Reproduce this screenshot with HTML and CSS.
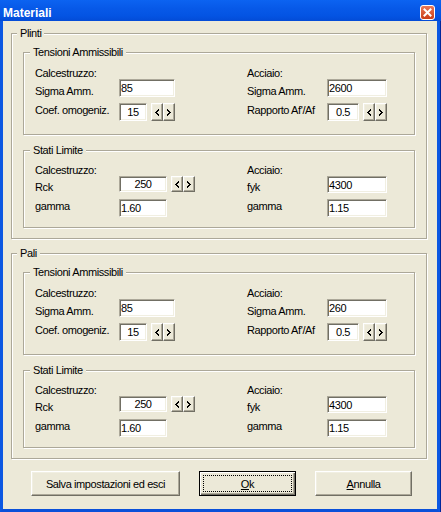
FILE: index.html
```html
<!DOCTYPE html>
<html lang="it">
<head>
<meta charset="utf-8">
<title>Materiali</title>
<link rel="stylesheet" href="styles.css">
</head>
<body>
<div class="window">
  <div class="titlebar">
    <span class="title">Materiali</span>
    <span class="close">
      <svg width="15" height="15" viewBox="0 0 15 15">
        <defs>
          <linearGradient id="cg" x1="0" y1="0" x2="0" y2="1">
            <stop offset="0" stop-color="#ea7a5a"/>
            <stop offset="1" stop-color="#c93a14"/>
          </linearGradient>
        </defs>
        <rect x="0.5" y="0.5" width="14" height="14" rx="2.5" fill="url(#cg)" stroke="#fff"/>
        <path d="M4.5 4.5 L10.5 10.5 M10.5 4.5 L4.5 10.5" stroke="#fff" stroke-width="2" stroke-linecap="square"/>
      </svg>
    </span>
  </div>
  <div class="frame">
    <div class="client">

      <fieldset class="group outer">
        <legend>Plinti</legend>
        <div class="outer-body">
          <fieldset class="group inner">
            <legend>Tensioni Ammissibili</legend>
            <div class="cols tens-body">
              <div class="col left">
                <div class="hdr">Calcestruzzo:</div>
                <div class="row ra"><span class="lbl">Sigma Amm.</span><input class="field w56" type="text" value="85" readonly></div>
                <div class="row rb"><span class="lbl">Coef. omogeniz.</span><input class="field w28 ctr" type="text" value="15" readonly><span class="spin"><span class="sb"><svg width="4" height="7" viewBox="0 0 4 7" shape-rendering="crispEdges"><path d="M3 0h1v1h-1z M2 1h2v1h-2z M1 2h2v1h-2z M0 3h2v1h-2z M1 4h2v1h-2z M2 5h2v1h-2z M3 6h1v1h-1z"/></svg></span><span class="sb"><svg width="4" height="7" viewBox="0 0 4 7" shape-rendering="crispEdges"><path d="M0 0h1v1h-1z M0 1h2v1h-2z M1 2h2v1h-2z M2 3h2v1h-2z M1 4h2v1h-2z M0 5h2v1h-2z M0 6h1v1h-1z"/></svg></span></span></div>
              </div>
              <div class="col right">
                <div class="hdr">Acciaio:</div>
                <div class="row ra"><span class="lbl">Sigma Amm.</span><input class="field w60" type="text" value="2600" readonly></div>
                <div class="row rb"><span class="lbl">Rapporto Af'/Af</span><input class="field w32 ctr" type="text" value="0.5" readonly><span class="spin"><span class="sb"><svg width="4" height="7" viewBox="0 0 4 7" shape-rendering="crispEdges"><path d="M3 0h1v1h-1z M2 1h2v1h-2z M1 2h2v1h-2z M0 3h2v1h-2z M1 4h2v1h-2z M2 5h2v1h-2z M3 6h1v1h-1z"/></svg></span><span class="sb"><svg width="4" height="7" viewBox="0 0 4 7" shape-rendering="crispEdges"><path d="M0 0h1v1h-1z M0 1h2v1h-2z M1 2h2v1h-2z M2 3h2v1h-2z M1 4h2v1h-2z M0 5h2v1h-2z M0 6h1v1h-1z"/></svg></span></span></div>
              </div>
            </div>
          </fieldset>
          <fieldset class="group inner stati">
            <legend>Stati Limite</legend>
            <div class="cols stati-body">
              <div class="col left">
                <div class="hdr">Calcestruzzo:</div>
                <div class="row sa"><span class="lbl">Rck</span><input class="field w48 h16 ctr" type="text" value="250" readonly><span class="spin s16"><span class="sb"><svg width="4" height="7" viewBox="0 0 4 7" shape-rendering="crispEdges"><path d="M3 0h1v1h-1z M2 1h2v1h-2z M1 2h2v1h-2z M0 3h2v1h-2z M1 4h2v1h-2z M2 5h2v1h-2z M3 6h1v1h-1z"/></svg></span><span class="sb"><svg width="4" height="7" viewBox="0 0 4 7" shape-rendering="crispEdges"><path d="M0 0h1v1h-1z M0 1h2v1h-2z M1 2h2v1h-2z M2 3h2v1h-2z M1 4h2v1h-2z M0 5h2v1h-2z M0 6h1v1h-1z"/></svg></span></span></div>
                <div class="row sb-row"><span class="lbl">gamma</span><input class="field w48" type="text" value="1.60" readonly></div>
              </div>
              <div class="col right">
                <div class="hdr">Acciaio:</div>
                <div class="row sa"><span class="lbl">fyk</span><input class="field w60 h17" type="text" value="4300" readonly></div>
                <div class="row sb-row"><span class="lbl">gamma</span><input class="field w60" type="text" value="1.15" readonly></div>
              </div>
            </div>
          </fieldset>
        </div>
      </fieldset>

      <fieldset class="group outer pali">
        <legend>Pali</legend>
        <div class="outer-body">
          <fieldset class="group inner">
            <legend>Tensioni Ammissibili</legend>
            <div class="cols tens-body">
              <div class="col left">
                <div class="hdr">Calcestruzzo:</div>
                <div class="row ra"><span class="lbl">Sigma Amm.</span><input class="field w56" type="text" value="85" readonly></div>
                <div class="row rb"><span class="lbl">Coef. omogeniz.</span><input class="field w28 ctr" type="text" value="15" readonly><span class="spin"><span class="sb"><svg width="4" height="7" viewBox="0 0 4 7" shape-rendering="crispEdges"><path d="M3 0h1v1h-1z M2 1h2v1h-2z M1 2h2v1h-2z M0 3h2v1h-2z M1 4h2v1h-2z M2 5h2v1h-2z M3 6h1v1h-1z"/></svg></span><span class="sb"><svg width="4" height="7" viewBox="0 0 4 7" shape-rendering="crispEdges"><path d="M0 0h1v1h-1z M0 1h2v1h-2z M1 2h2v1h-2z M2 3h2v1h-2z M1 4h2v1h-2z M0 5h2v1h-2z M0 6h1v1h-1z"/></svg></span></span></div>
              </div>
              <div class="col right">
                <div class="hdr">Acciaio:</div>
                <div class="row ra"><span class="lbl">Sigma Amm.</span><input class="field w60" type="text" value="260" readonly></div>
                <div class="row rb"><span class="lbl">Rapporto Af'/Af</span><input class="field w32 ctr" type="text" value="0.5" readonly><span class="spin"><span class="sb"><svg width="4" height="7" viewBox="0 0 4 7" shape-rendering="crispEdges"><path d="M3 0h1v1h-1z M2 1h2v1h-2z M1 2h2v1h-2z M0 3h2v1h-2z M1 4h2v1h-2z M2 5h2v1h-2z M3 6h1v1h-1z"/></svg></span><span class="sb"><svg width="4" height="7" viewBox="0 0 4 7" shape-rendering="crispEdges"><path d="M0 0h1v1h-1z M0 1h2v1h-2z M1 2h2v1h-2z M2 3h2v1h-2z M1 4h2v1h-2z M0 5h2v1h-2z M0 6h1v1h-1z"/></svg></span></span></div>
              </div>
            </div>
          </fieldset>
          <fieldset class="group inner stati">
            <legend>Stati Limite</legend>
            <div class="cols stati-body">
              <div class="col left">
                <div class="hdr">Calcestruzzo:</div>
                <div class="row sa"><span class="lbl">Rck</span><input class="field w48 h16 ctr" type="text" value="250" readonly><span class="spin s16"><span class="sb"><svg width="4" height="7" viewBox="0 0 4 7" shape-rendering="crispEdges"><path d="M3 0h1v1h-1z M2 1h2v1h-2z M1 2h2v1h-2z M0 3h2v1h-2z M1 4h2v1h-2z M2 5h2v1h-2z M3 6h1v1h-1z"/></svg></span><span class="sb"><svg width="4" height="7" viewBox="0 0 4 7" shape-rendering="crispEdges"><path d="M0 0h1v1h-1z M0 1h2v1h-2z M1 2h2v1h-2z M2 3h2v1h-2z M1 4h2v1h-2z M0 5h2v1h-2z M0 6h1v1h-1z"/></svg></span></span></div>
                <div class="row sb-row"><span class="lbl">gamma</span><input class="field w48" type="text" value="1.60" readonly></div>
              </div>
              <div class="col right">
                <div class="hdr">Acciaio:</div>
                <div class="row sa"><span class="lbl">fyk</span><input class="field w60 h17" type="text" value="4300" readonly></div>
                <div class="row sb-row"><span class="lbl">gamma</span><input class="field w60" type="text" value="1.15" readonly></div>
              </div>
            </div>
          </fieldset>
        </div>
      </fieldset>

      <div class="buttons">
        <button class="btn wide" type="button">Salva impostazioni ed esci</button>
        <button class="btn default" type="button"><span class="focus"><u>O</u>k</span></button>
        <button class="btn" type="button"><u>A</u>nnulla</button>
      </div>

    </div>
  </div>
</div>
</body>
</html>
```

FILE: styles.css
```css
html, body {
  margin: 0;
  padding: 0;
  background: #ece9d8;
}

body {
  font-family: "Liberation Sans", Arial, sans-serif;
  font-size: 11px;
  letter-spacing: -0.4px;
  color: #000;
}

.window {
  width: 441px;
  height: 512px;
  display: flex;
  flex-direction: column;
  background: #00289c;
  overflow: hidden;
}

/* ---------- title bar ---------- */
.titlebar {
  flex: none;
  height: 21px;
  box-sizing: border-box;
  display: flex;
  justify-content: space-between;
  align-items: flex-start;
  padding: 6px 6px 0 3px;
  background: linear-gradient(#0c63f1 0%, #0759e8 40%, #0454e3 75%, #034bd6 100%);
  color: #fff;
  font-weight: bold;
  font-size: 12px;
  line-height: 14px;
  letter-spacing: 0;
}

.close {
  display: block;
  width: 15px;
  height: 15px;
  margin-top: -1px;
}

.close svg {
  display: block;
}

/* ---------- frame ---------- */
.frame {
  flex: 1;
  display: flex;
  padding-right: 1px;
}

.client {
  flex: 1;
  background: #ece9d8;
  border-left: 3px solid #0b57e2;
  border-right: 3px solid #0b57e2;
  border-bottom: 3px solid #0a50d9;
  padding: 6px 10px 0 8px;
}

/* ---------- group boxes ---------- */
.group {
  margin: 0;
  padding: 0;
  min-width: 0;
  border: 1px solid #aca899;
  box-shadow: 1px 1px 0 #fff, inset 1px 1px 0 #fff;
}

.group > legend {
  padding: 0 3px;
  line-height: 13px;
  height: 13px;
  background: #ece9d8;
}

.outer > legend {
  margin-left: 5px;
}

.inner > legend {
  margin-left: 6px;
}

.pali {
  margin-top: 8px;
}

.outer-body {
  padding: 6px 11px 10px 11px;
}

.stati {
  margin-top: 9px;
}

.tens-body {
  padding: 8px 0 13px 11px;
}

.stati-body {
  padding: 7px 0 10px 11px;
}

.cols {
  display: grid;
  grid-template-columns: 212px 1fr;
}

.hdr {
  height: 12px;
  line-height: 13px;
  white-space: nowrap;
}

.row {
  display: flex;
  align-items: flex-start;
  height: 18px;
}

.lbl {
  flex: none;
  width: 84px;
  line-height: 13px;
  white-space: nowrap;
}

.right .lbl {
  width: 80px;
}

.ra .lbl { margin-top: 6px; }
.rb { margin-top: 6px; }
.rb .lbl { margin-top: 1px; }

.sa { height: 17px; }
.sa .lbl { margin-top: 5px; }
.sb-row { margin-top: 6px; }
.sb-row .lbl { margin-top: 1px; }

/* ---------- edit fields ---------- */
.field {
  flex: none;
  box-sizing: border-box;
  height: 18px;
  margin: 0;
  padding: 0 1px;
  border: 1px solid;
  border-color: #aca899 #fff #fff #aca899;
  box-shadow: inset 1px 1px 0 #716f64, inset -1px -1px 0 #f1efe2;
  background: #fff;
  color: #000;
  font: inherit;
  letter-spacing: inherit;
  outline: none;
  border-radius: 0;
}

.w28 { width: 28px; }
.w32 { width: 32px; }
.w48 { width: 48px; }
.w56 { width: 56px; }
.w60 { width: 60px; }
.h16 { height: 16px; }
.h17 { height: 17px; }
.ctr { text-align: center; }

/* ---------- spin buttons ---------- */
.spin {
  flex: none;
  display: flex;
  margin-left: 4px;
  height: 18px;
}

.spin.s16 {
  height: 16px;
}

.sb {
  width: 12px;
  height: 100%;
  box-sizing: border-box;
  display: flex;
  align-items: center;
  justify-content: center;
  background: #ece9d8;
  border: 1px solid;
  border-color: #fff #716f64 #716f64 #fff;
  box-shadow: inset -1px -1px 0 #aca899, inset 1px 1px 0 #f1efe2;
}

.sb svg {
  display: block;
  fill: #000;
}

/* ---------- buttons ---------- */
.buttons {
  display: flex;
  gap: 19px;
  margin-top: 12px;
  padding-left: 20px;
}

.btn {
  flex: none;
  width: 97px;
  height: 25px;
  box-sizing: border-box;
  margin: 0;
  padding: 0;
  display: flex;
  align-items: center;
  justify-content: center;
  background: #ece9d8;
  color: #000;
  font: inherit;
  letter-spacing: inherit;
  border: 1px solid;
  border-color: #fff #716f64 #716f64 #fff;
  box-shadow: inset -1px -1px 0 #aca899, inset 1px 1px 0 #f1efe2;
  border-radius: 0;
}

.btn.wide {
  width: 149px;
}

.btn.default {
  border: 1px solid #000;
  box-shadow: inset 1px 1px 0 #fff, inset -1px -1px 0 #716f64, inset -2px -2px 0 #aca899;
  padding: 3px;
  align-items: stretch;
}

.focus {
  flex: 1;
  display: flex;
  align-items: center;
  justify-content: center;
  border: 1px dotted #000;
}

.btn u {
  text-decoration: underline;
}
```
